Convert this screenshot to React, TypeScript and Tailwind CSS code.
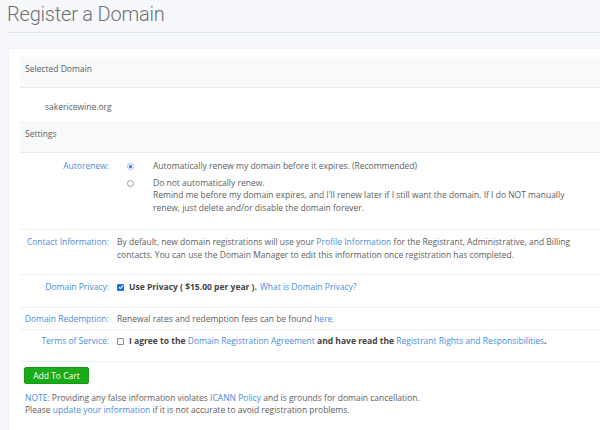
const link = 'text-[#4a8ee0]';

function Label({ children }: { children: React.ReactNode }) {
  return <div className={`w-[89px] shrink-0 text-right ${link}`}>{children}</div>;
}

export default function App() {
  return (
    <div
      className="w-[600px] h-[430px] overflow-hidden bg-[#f6f8fb] text-[8.5px] leading-[12.5px] text-[#5e5e5e]"
      style={{ fontFamily: '"Open Sans", "Liberation Sans", sans-serif' }}
    >
      <div className="ml-[7px] h-[33px] border-b border-[#e2e7ee] pt-[1px]">
        <h1
          className="text-[20px] leading-[26px] font-light text-[#707070] tracking-[-0.2px]"
          style={{ fontFamily: 'Roboto, "Open Sans", sans-serif' }}
        >
          Register a Domain
        </h1>
      </div>

      <div className="ml-[8px] mt-[15px] w-[600px] h-[400px] bg-white border border-[#eef1f5] shadow-[0_0_2px_rgba(0,0,0,0.05)] pt-[8px] pl-[11px]">
        {/* Selected domain */}
        <div className="h-[31px] bg-[#f8f9fb] border-b border-[#e9ecef] pl-[5px] pt-[6px]">Selected Domain</div>
        <div className="h-[35px] border-b border-[#f0f1f3] pl-[25px] pt-[13px]">sakericewine.org</div>

        {/* Settings */}
        <div className="h-[30px] bg-[#f8f9fb] border-b border-[#e9ecef] pl-[5px] pt-[5px]">Settings</div>

        <div className="flex h-[77px] border-b border-[#eef0f2] pt-[7px]">
          <Label>Autorenew:</Label>
          <div className="flex flex-col gap-[4px]">
            <div className="flex">
              <div className="w-[44px] flex justify-end pr-[19px] pt-[3px]">
                <div className="w-[7px] h-[7px] rounded-full border border-[#9bb8e8] flex items-center justify-center">
                  <div className="w-[3px] h-[3px] rounded-full bg-[#1a73e8]" />
                </div>
              </div>
              <div>Automatically renew my domain before it expires. (Recommended)</div>
            </div>
            <div className="flex">
              <div className="w-[44px] flex justify-end pr-[19px] pt-[3px]">
                <div className="w-[7px] h-[7px] rounded-full border border-[#9a9a9a] bg-white" />
              </div>
              <div className="w-[420px]">
                Do not automatically renew.
                <br />
                Remind me before my domain expires, and I'll renew later if I still want the domain. If I do NOT manually
                renew, just delete and/or disable the domain forever.
              </div>
            </div>
          </div>
        </div>

        <div className="flex h-[45px] border-b border-[#eef0f2] pt-[6px]">
          <Label>Contact Information:</Label>
          <div className="pl-[8px] w-[470px]">
            By default, new domain registrations will use your <span className={link}>Profile Information</span> for the
            Registrant, Administrative, and Billing contacts. You can use the Domain Manager to edit this information once
            registration has completed.
          </div>
        </div>

        <div className="flex h-[33px] border-b border-[#eef0f2] pt-[6px]">
          <Label>Domain Privacy:</Label>
          <div className="pl-[8px] flex items-center h-[12.5px]">
            <div className="w-[7px] h-[7px] rounded-[1px] bg-[#1a73e8] flex items-center justify-center mr-[5px]">
              <svg viewBox="0 0 8 8" className="w-[6px] h-[6px]">
                <path d="M1.3 4.2 3.2 6 6.8 1.8" stroke="white" strokeWidth="1.4" fill="none" />
              </svg>
            </div>
            <span className="font-bold text-[#444]">Use Privacy ( $15.00 per year ).</span>
            <span className={`${link} ml-[3px]`}>What is Domain Privacy?</span>
          </div>
        </div>

        <div className="flex h-[22px] border-b border-[#eef0f2] pt-[5px]">
          <Label>Domain Redemption:</Label>
          <div className="pl-[8px]">
            Renewal rates and redemption fees can be found <span className={link}>here.</span>
          </div>
        </div>

        <div className="flex h-[32px] border-b border-[#eef0f2] pt-[5px]">
          <Label>Terms of Service:</Label>
          <div className="pl-[8px] flex items-center h-[12.5px] whitespace-pre">
            <div className="w-[7px] h-[7px] rounded-[1px] border border-[#8a8a8a] bg-white mr-[5px]" />
            <span className="font-bold text-[#444]">I agree to the </span>
            <span className={link}>Domain Registration Agreement</span>
            <span className="font-bold text-[#444]"> and have read the </span>
            <span className={link}>Registrant Rights and Responsibilities</span>
            <span className="font-bold text-[#444]">.</span>
          </div>
        </div>

        <div className="pl-[4px] pt-[5px]">
          <button className="w-[65px] h-[17px] rounded-[2px] bg-[#1aab1a] border border-[#159a15] text-white text-[8.5px] leading-[15px]">
            Add To Cart
          </button>
        </div>

        <div className="pl-[5px] pt-[8px] leading-[12px]">
          <span className={link}>NOTE:</span> Providing any false information violates{' '}
          <span className={link}>ICANN Policy</span> and is grounds for domain cancellation.
          <br />
          Please <span className={link}>update your information</span> if it is not accurate to avoid registration problems.
        </div>
      </div>
    </div>
  );
}
